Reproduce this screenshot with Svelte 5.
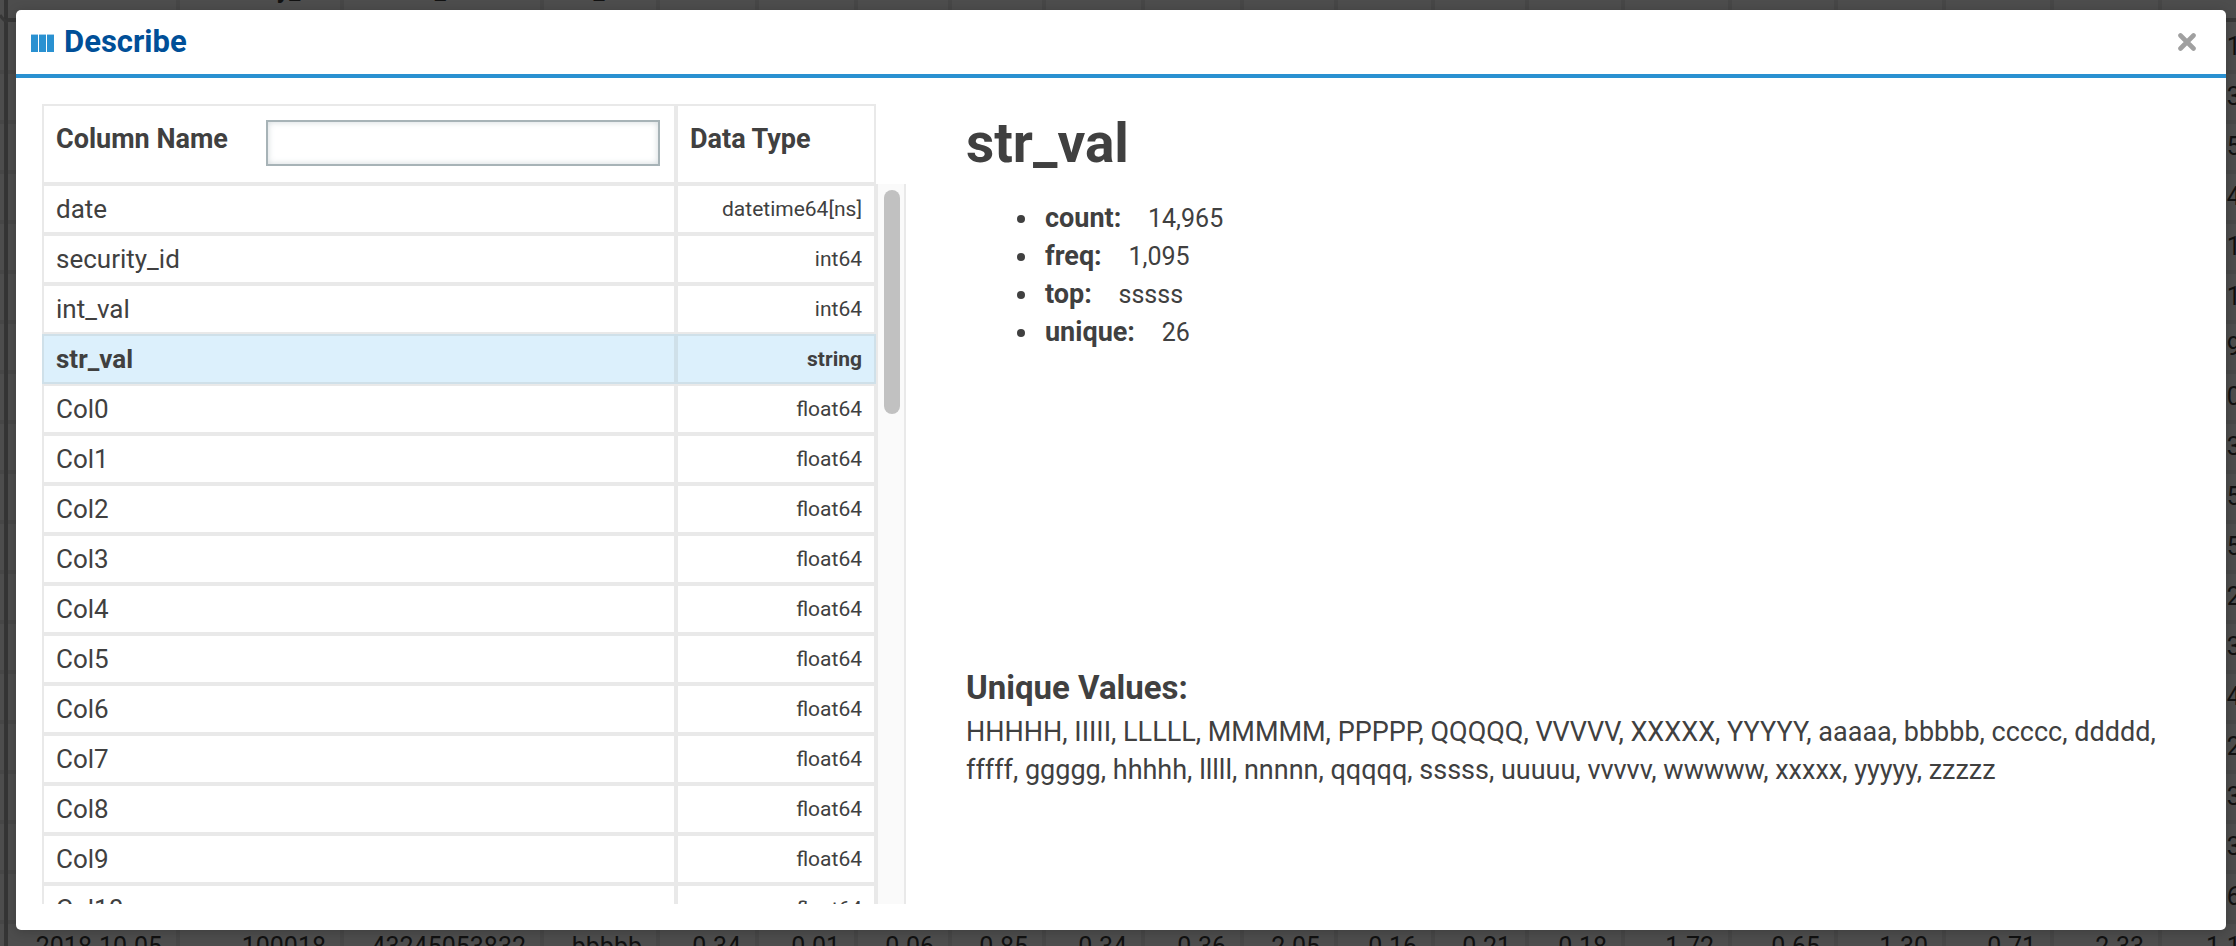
<script>
  const columns = [
    { name: 'date', dtype: 'datetime64[ns]' },
    { name: 'security_id', dtype: 'int64' },
    { name: 'int_val', dtype: 'int64' },
    { name: 'str_val', dtype: 'string' },
    ...Array.from({ length: 11 }, (_, i) => ({ name: `Col${i}`, dtype: 'float64' })),
  ];

  const stats = [
    ['count', '14,965'],
    ['freq', '1,095'],
    ['top', 'sssss'],
    ['unique', '26'],
  ];

  const uniques = [...'HILMPQVXYabcdfghlnqsuvwxyz'].map((c) => c.repeat(5)).join(', ');

  // Data grid under the dialog
  const widths = [172, 164, 200, 116, 99, 99, 94, 94, 99, 99, 94, 97, 94, 96, 107, 106, 108, 108, 108, 110];
  const gridHeads = ['date', 'security_id', 'int_val', 'str_val'];
  const lastColumn = ['0.1', '0.3', '0.5', '0.4', '0.1', '0.1', '0.9', '0.0', '0.3', '0.5', '0.5', '0.2', '0.3', '0.4', '0.2', '0.3', '0.3', '0.6'];
  const lastRow = ['2018-10-05', '100018', '43245053832', 'bbbbb', '0.34', '0.01', '0.06', '0.85', '0.34', '0.36', '2.05', '0.16', '0.21', '0.18', '1.72', '0.65', '1.30', '0.71', '2.33', '1.1'];
  const gridRows = [
    ...lastColumn.map((v) => widths.map((_, i) => (i === widths.length - 1 ? v : ''))),
    lastRow,
  ];

  let selected = $state('str_val');
  let filter = $state('');
  const shown = $derived(columns.filter((c) => c.name.toLowerCase().includes(filter.toLowerCase())));
</script>

<div class="page">
  <div class="backdrop" aria-hidden="true">
    <div class="gutter"></div>
    <div class="rail"></div>
    <div class="grid">
      <div class="grid-row head">
        {#each widths as w, i}
          <span class="cell" style="width: {w}px">{gridHeads[i] ?? ''}</span>
        {/each}
      </div>
      {#each gridRows as row}
        <div class="grid-row">
          {#each row as v, i}
            <span class="cell" style="width: {widths[i]}px">{v}</span>
          {/each}
        </div>
      {/each}
    </div>
    <svg class="corner" viewBox="0 0 8 10"><path d="M0 1Q3 6 8 9" fill="none" stroke="#373737" stroke-width="3" /></svg>
  </div>

  <div class="modal" role="dialog" aria-labelledby="dialog-title">
    <header>
      <svg class="bars" viewBox="0 0 23 18" aria-hidden="true">
        <path d="M0 0h7v18H0zM8 0h7v18H8zM16 0h7v18h-7z" fill="#2a91d1" />
        <path d="M0 0h7v1H0zM8 0h7v1H8zM16 0h7v1h-7z" fill="#a5cfeb" />
      </svg>
      <h1 id="dialog-title">Describe</h1>
      <button class="close" aria-label="Close">
        <svg viewBox="0 0 18 18" aria-hidden="true"><path d="M2.5 2.5l13 13M15.5 2.5l-13 13" fill="none" stroke="#a0a0a0" stroke-width="4.6" stroke-linecap="round" /></svg>
      </button>
    </header>

    <div class="body">
      <section class="columns">
        <table class="names">
          <colgroup><col /><col class="type-col" /></colgroup>
          <thead>
            <tr>
              <th>
                <div class="filter">
                  <label for="name-filter">Column Name</label>
                  <input id="name-filter" type="text" bind:value={filter} />
                </div>
              </th>
              <th><div class="filter"><span>Data Type</span></div></th>
            </tr>
          </thead>
        </table>
        <div class="scroller">
          <div class="rows">
            <table class="names">
              <colgroup><col /><col class="type-col" /></colgroup>
              <tbody>
                {#each shown as c (c.name)}
                  <tr class:selected={c.name === selected} onclick={() => (selected = c.name)}>
                    <td>{c.name}</td>
                    <td class="dtype">{c.dtype}</td>
                  </tr>
                {/each}
              </tbody>
            </table>
          </div>
          <div class="track"><div class="thumb"></div></div>
        </div>
      </section>

      <section class="details">
        <h2>{selected}</h2>
        <ul>
          {#each stats as [k, v]}
            <li><b>{k}:</b> <span>{v}</span></li>
          {/each}
        </ul>
        <h3>Unique Values:</h3>
        <p>{uniques}</p>
      </section>
    </div>
  </div>
</div>

<style>
  :global(body) {
    background: #4d4d4d;
    overflow: hidden;
  }

  .page {
    position: relative;
    display: flex;
    box-sizing: border-box;
    height: 100vh;
    padding: 10px 10px 16px 16px;
    font-family: Roboto, sans-serif;
    font-size: 27px;
    line-height: 38px;
    color: #404040;
  }

  .backdrop {
    position: absolute;
    inset: 0;
    display: flex;
    overflow: hidden;
    background: #4d4d4d;
    color: #111;
    font-size: 25px;
  }
  .gutter {
    flex: none;
    width: 4px;
    margin-top: 24px;
    background: repeating-linear-gradient(#4d4d4d 0 46px, #474747 46px 50px);
  }
  .rail {
    flex: none;
    width: 4px;
    background: #353535;
  }
  .corner {
    position: absolute;
    left: 0;
    top: 14px;
    width: 8px;
    height: 10px;
  }
  .grid-row {
    display: flex;
    box-sizing: border-box;
    height: 50px;
    border-bottom: 4px solid #474747;
    line-height: 46px;
  }
  .grid-row.head {
    height: 22px;
    margin-bottom: 2px;
    border-color: #373737;
    align-items: flex-end;
    font-weight: 700;
    line-height: 30px;
  }
  .cell {
    flex: none;
    box-sizing: border-box;
    height: 100%;
    padding-right: 14px;
    border-right: 4px solid #474747;
    text-align: right;
    white-space: nowrap;
  }
  .cell:last-child {
    padding-left: 44px;
    text-align: left;
  }
  .head .cell {
    height: 43px;
    padding: 0;
    text-align: center;
  }

  .modal {
    position: relative;
    display: flex;
    flex: 1;
    flex-direction: column;
    min-width: 0;
    border-radius: 5px;
    background: #fff;
    box-shadow: 0 2px 12px rgb(0 0 0 / 20%);
  }

  header {
    display: flex;
    flex: none;
    align-items: center;
    height: 64px;
    padding: 0 30px 0 15px;
    border-bottom: 4px solid #2a91d1;
  }
  .bars {
    width: 23px;
    height: 18px;
    margin: 2px 10px 0 0;
  }
  h1 {
    margin: 0;
    color: #004f98;
    font-size: 31px;
    line-height: 38px;
  }
  .close {
    display: flex;
    margin-left: auto;
    padding: 0;
    border: 0;
    background: none;
    cursor: pointer;
  }
  .close svg {
    width: 18px;
    height: 18px;
  }

  .body {
    display: grid;
    flex: 1;
    grid-template-columns: 2fr 3fr;
    min-height: 0;
    padding: 26px 24px 26px 26px;
  }
  .columns {
    display: flex;
    flex-direction: column;
    min-width: 0;
    min-height: 0;
  }
  .names {
    width: 100%;
    border-spacing: 0;
    table-layout: fixed;
  }
  .columns > .names {
    flex: none;
    width: calc(100% - 30px);
  }
  .type-col {
    width: 200px;
  }
  th,
  td {
    box-sizing: border-box;
    border: 2px solid #e9e9e9;
    text-align: left;
  }
  th {
    height: 80px;
    padding: 14px 14px 0 12px;
    vertical-align: top;
  }
  td {
    height: 50px;
    padding: 0 12px;
    font-size: 26px;
    line-height: 30px;
  }
  td.dtype {
    font-size: 21px;
    text-align: right;
  }
  tr.selected td {
    border-color: #cfe0e9;
    background: #dcf0fc;
    font-weight: 700;
  }
  .filter {
    display: flex;
    gap: 38px;
  }
  .filter input {
    flex: 1;
    box-sizing: border-box;
    min-width: 0;
    height: 46px;
    padding: 0 10px;
    border: 2px solid #a7b3b7;
    outline: 0;
    box-shadow: inset 0 0 6px rgb(120 140 150 / 35%);
    font: inherit;
    color: inherit;
  }
  .scroller {
    display: flex;
    flex: 1;
    min-height: 0;
  }
  .rows {
    flex: 1;
    overflow: hidden;
  }
  .track {
    box-sizing: border-box;
    flex: none;
    width: 30px;
    padding: 6px 4px 0 6px;
    border: solid #e9e9e9;
    border-width: 0 2px;
    background: #fafafa;
  }
  .thumb {
    height: 224px;
    border-radius: 8px;
    background: #c1c1c1;
  }

  .details {
    min-width: 0;
    padding: 0 20px 0 60px;
  }
  h2 {
    margin: 0 0 17px;
    font-size: 55px;
    line-height: 78px;
  }
  ul {
    min-height: 464px;
    margin: 0;
    padding-left: 74px;
  }
  li {
    padding-left: 5px;
  }
  li span {
    margin-left: 20px;
    font-size: 25px;
    line-height: 1;
  }
  h3 {
    margin: 0;
    font-size: 33px;
    line-height: 50px;
  }
  p {
    margin: 0;
  }
</style>
